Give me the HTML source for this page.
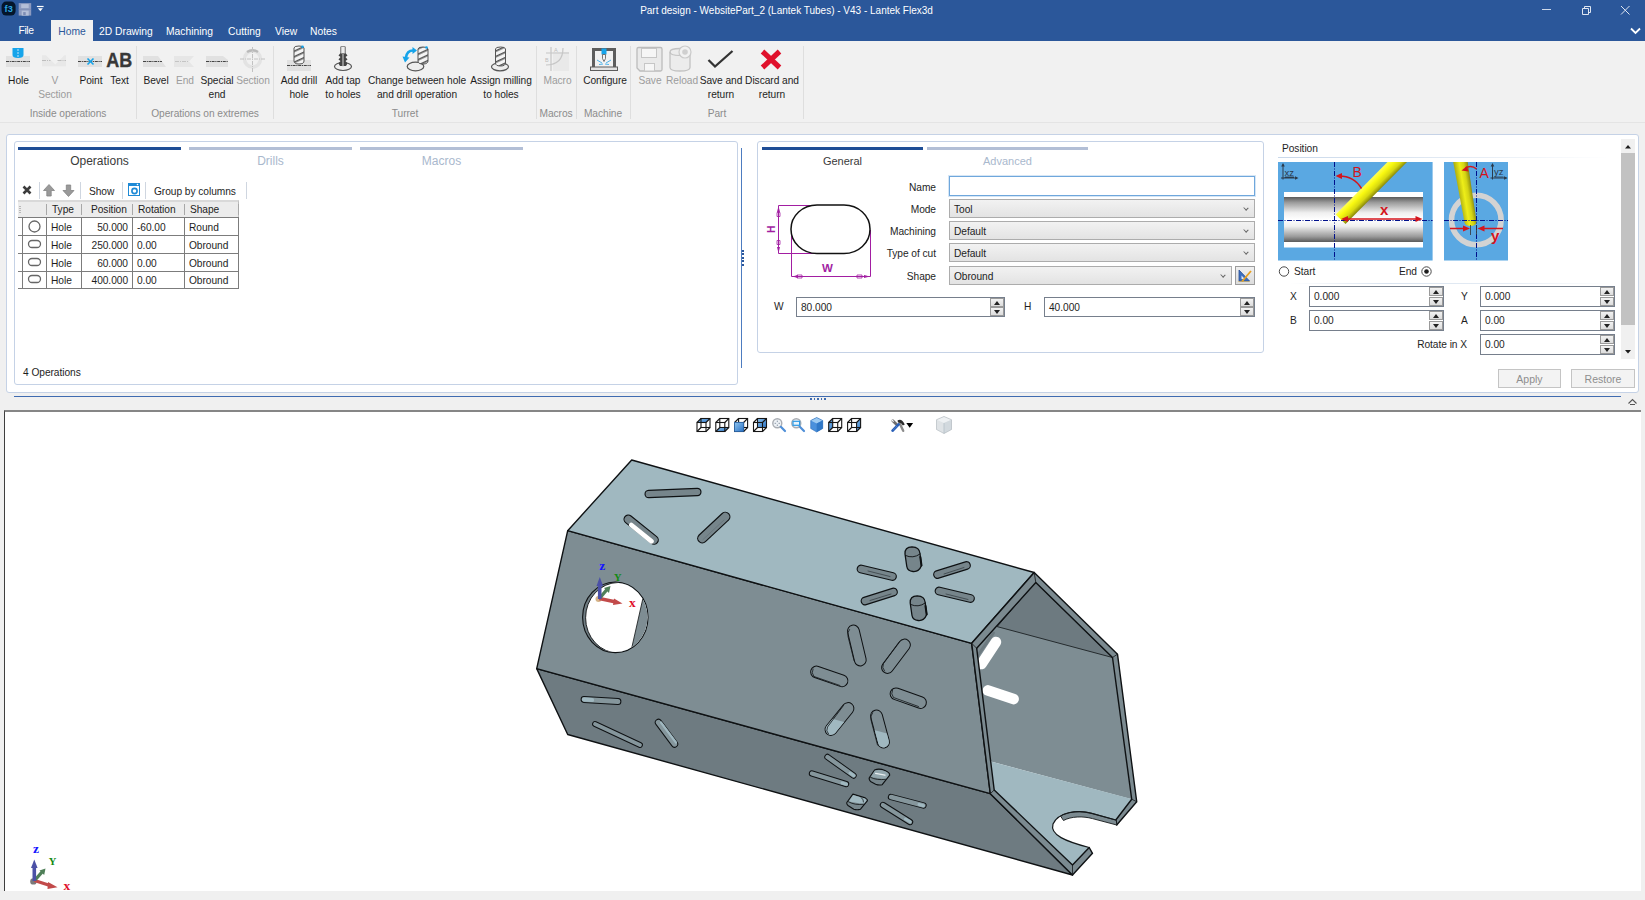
<!DOCTYPE html>
<html>
<head>
<meta charset="utf-8">
<title>Part design</title>
<style>
*{box-sizing:border-box;margin:0;padding:0}
html,body{width:1645px;height:900px;overflow:hidden;background:#f0f0f0}
body{position:relative;font-family:"Liberation Sans",sans-serif;font-size:11px;color:#1e1e1e}
.abs{position:absolute}
#titlebar{position:absolute;left:0;top:0;width:1645px;height:41px;background:#2b579a}
#title{position:absolute;left:0;top:3.800px;width:1573px;text-align:center;color:#fff;font-size:10px;line-height:14px}
.tab{position:absolute;top:25px;color:#fff;font-size:10.300px;line-height:14px;white-space:nowrap}
#hometab{position:absolute;left:51px;top:20px;width:42px;height:21px;background:#f1f1f1}
#hometab span{position:absolute;left:0;width:42px;text-align:center;top:5px;color:#2b579a;font-size:10.300px;line-height:14px}
#ribbon{position:absolute;left:0;top:41px;width:1645px;height:82px;background:#f1f1f1;border-bottom:1px solid #e4e4e4}
.rl{position:absolute;top:74px;letter-spacing:-.05px;font-size:10.200px;line-height:14px;text-align:center;white-space:nowrap;color:#1e1e1e;transform:translateX(-50%)}
.rl.dis{color:#9c9c9c}
.gl{position:absolute;top:106.800px;letter-spacing:-.05px;font-size:10.200px;line-height:14px;text-align:center;white-space:nowrap;color:#8c8c8c;transform:translateX(-50%)}
.gsep{position:absolute;top:46px;width:1px;height:73px;background:#dedede}
.panel{position:absolute;background:#fff;border:1px solid #c5d2e6;border-radius:3px}
.tabbar{position:absolute;top:147px;height:3px}
.tabbar.on{background:#1f4e96}
.tabbar.off{background:#b3bfd6}
.tlabel{position:absolute;top:153px;font-size:12px;line-height:16px;text-align:center;white-space:nowrap}
.tlabel.on{color:#3a3a3a}
.tlabel.off{color:#a9b8cd}
.t11{position:absolute;letter-spacing:-.05px;font-size:10.200px;line-height:14px;white-space:nowrap;color:#1e1e1e}
.inp{position:absolute;background:#fff;border:1px solid #767f8c;letter-spacing:-.05px;font-size:10.200px;line-height:16px;padding-left:4px;white-space:nowrap}
.cmb{position:absolute;height:19px;background:linear-gradient(#f2f2f2,#e3e3e3);border:1px solid #acacac;letter-spacing:-.05px;font-size:10.200px;line-height:19.500px;padding-left:4px;white-space:nowrap}
.cmb:after{content:"";position:absolute;right:6px;top:5.500px;width:3px;height:3px;border-right:1px solid #666;border-bottom:1px solid #666;transform:rotate(45deg) scale(1,.9)}
.spin{position:absolute;width:14px;height:9px;background:linear-gradient(#f2f2f2,#dcdcdc);border:1px solid #9a9a9a}
.spin:after{content:"";position:absolute;left:3px;top:2px;border-left:3px solid transparent;border-right:3px solid transparent}
.spin.up:after{border-bottom:4px solid #222}
.spin.dn:after{border-top:4px solid #222}
.btn{position:absolute;height:19px;background:#f3f3f3;border:1px solid #c4c4c4;color:#8e8e8e;font-size:10.500px;line-height:18.400px;text-align:center}
</style>
</head>
<body>
<div id="titlebar">
  <div id="title">Part design - WebsitePart_2 (Lantek Tubes) - V43 - Lantek Flex3d</div>
  <!-- app icon -->
  <svg class="abs" style="left:0;top:0" width="50" height="18" viewBox="0 0 50 18">
    <rect x="1.600" y="1.600" width="14" height="14" rx="4.500" fill="#04162b"/>
    <text x="4.600" y="12.300" font-family="Liberation Sans" font-size="9.500" font-weight="bold" fill="#2aa6e4" textLength="8.200" lengthAdjust="spacingAndGlyphs">f3</text>
    <g transform="translate(18.700,2.600)">
      <path d="M0 .5h12.500V13H0z" fill="#8d9bc0"/>
      <rect x="2.500" y="1.500" width="7.500" height="4" fill="#b4bfd8"/>
      <rect x="3" y="8" width="7" height="5" fill="#b4bfd8"/>
      <rect x="4.500" y="9.500" width="2.500" height="3" fill="#7d8cb4"/>
      <path d="M0 6.800h12.500" stroke="#7a89b0" stroke-width=".6"/>
    </g>
    <path d="M36.900 6.500h6.700" stroke="#fff" stroke-width="1.200"/>
    <path d="M37.800 8.200h5.100l-2.550 3z" fill="#fff"/>
  </svg>
  <!-- window controls -->
  <svg class="abs" style="left:1530px;top:0" width="115" height="41" viewBox="0 0 115 41">
    <path d="M12 9.5h9" stroke="#cfd9ea" stroke-width="1" fill="none"/>
    <path d="M52.5 8.5h6v6h-6z M54.5 8.5v-2h6v6h-2" stroke="#dfe6f2" stroke-width="1" fill="none"/>
    <path d="M91 6l8.5 8.5M99.5 6L91 14.5" stroke="#dfe6f2" stroke-width="1" fill="none"/>
    <path d="M101 28.5l4.5 4.5 4.5-4.5" stroke="#fff" stroke-width="1.8" fill="none"/>
  </svg>
  <div class="tab" style="left:18.500px;top:24.400px;letter-spacing:-.4px">File</div>
  <div id="hometab"><span>Home</span></div>
  <div class="tab" style="left:99px">2D Drawing</div>
  <div class="tab" style="left:166px">Machining</div>
  <div class="tab" style="left:228px">Cutting</div>
  <div class="tab" style="left:275px">View</div>
  <div class="tab" style="left:310px">Notes</div>
</div>
<div id="ribbon"></div>
<svg class="abs" style="left:0;top:41px" width="820" height="82" viewBox="0 41 820 82">
  <defs>
    <pattern id="dr" width="4" height="5" patternUnits="userSpaceOnUse" patternTransform="rotate(-25)"><rect width="4" height="5" fill="#f4f4f4"/><rect y="0" width="4" height="1.6" fill="#555"/></pattern>
  </defs>
  <!-- Hole -->
  <rect x="6" y="56" width="24" height="11" fill="#e1e1e1"/>
  <path d="M6 61.5h24" stroke="#444" stroke-width="1" stroke-dasharray="3 .7 1.200 .7"/>
  <path d="M12.5 48h11v7q0 3-5.5 3t-5.500-3z" fill="#16a4ea"/>
  <path d="M18 49v8" stroke="#bfe3f8" stroke-width="1" stroke-dasharray="2 1"/>
  <!-- V section (disabled) -->
  <path d="M42 55.200H46L55.300 64.500 64.300 55.200H66V66.300H42z" fill="#e8e8e8"/>
  <path d="M42 60.500h8.500M57.500 60.500h8.500" stroke="#bdbdbd" stroke-width="1" stroke-dasharray="4 1 1 1"/>
  <!-- Point -->
  <rect x="78" y="56" width="24" height="11" fill="#e1e1e1"/>
  <path d="M78 61.500h24" stroke="#444" stroke-width="1" stroke-dasharray="3 .7 1.200 .7"/>
  <path d="M87.500 58.500l6 6M93.500 58.500l-6 6" stroke="#16a4ea" stroke-width="1.600"/>
  <!-- AB -->
  <text x="106.200" y="66.700" font-family="Liberation Sans" font-weight="bold" font-size="21" fill="#383838" stroke="#383838" stroke-width=".35" textLength="26" lengthAdjust="spacingAndGlyphs">AB</text>
  <!-- Bevel -->
  <path d="M143 56h15l8 11H143z" fill="#e1e1e1"/>
  <path d="M143 61.500h19" stroke="#444" stroke-width="1" stroke-dasharray="3 .7 1.200 .7"/>
  <!-- End (disabled) -->
  <path d="M174 56h20l-5 5.500 5 5.500H174z" fill="#e6e6e6"/>
  <path d="M175 61.500h13" stroke="#c4c4c4" stroke-width="1" stroke-dasharray="4 1 1 1"/>
  <!-- Special end -->
  <path d="M206 56h17l5 4v7H206z" fill="#e1e1e1"/>
  <path d="M206 61.500h22" stroke="#444" stroke-width="1" stroke-dasharray="3 .7 1.200 .7"/>
  <!-- Section (disabled) -->
  <circle cx="252.500" cy="59" r="8" fill="none" stroke="#e3e3e3" stroke-width="3.500"/>
  <path d="M247 52q5.500-3.600 11 0" stroke="#b9b9b9" stroke-width="2.400" fill="none"/>
  <path d="M240 59h25M252.500 47v25" stroke="#c2c2c2" stroke-width="1" stroke-dasharray="4 1 1 1"/>
  <!-- Add drill hole -->
  <rect x="287" y="60" width="24" height="11" fill="#e1e1e1"/>
  <path d="M287 65.500h24" stroke="#444" stroke-width="1" stroke-dasharray="3 .7 1.200 .7"/>
  <path d="M294 48q0-2 5-2t5 2v13q0 3-5 3t-5-3z" fill="url(#dr)" stroke="#555" stroke-width="1"/>
  <circle cx="302.500" cy="46.800" r="1.300" fill="#16a4ea"/>
  <!-- Add tap -->
  <ellipse cx="343" cy="66.500" rx="8.500" ry="4" fill="#eee" stroke="#555" stroke-width="1.200"/>
  <path d="M340.500 47q2.500-1.500 5 0v6l2 2.500-2 1.500 2 2.500-2 1.500 2 2.500-1.500 2.500h-6l-1.500-2.500 2-2.500-2-1.500 2-2.500-2-1.500 2-2.500z" fill="#444"/>
  <rect x="341" y="46.500" width="4" height="7" fill="#ececec" stroke="#777" stroke-width=".6"/>
  <path d="M343 54v13" stroke="#d8d8d8" stroke-width="1"/>
  <!-- Change between -->
  <ellipse cx="415.500" cy="66.500" rx="8.300" ry="4.300" fill="#eee" stroke="#555" stroke-width="1.200"/>
  <path d="M418 49q0-2 5-2t5 2v12q0 3-5 3t-5-3z" fill="url(#dr)" stroke="#555" stroke-width="1"/>
  <circle cx="426.500" cy="47.500" r="1.300" fill="#16a4ea"/>
  <path d="M414 50.500q-7-.5-8 7" stroke="#16a4ea" stroke-width="2.600" fill="none"/>
  <path d="M412.500 47l4.500 3.500-4.500 3.500zM402.500 56.500l7 1-4.500 5z" fill="#16a4ea"/>
  <!-- Assign milling -->
  <ellipse cx="500" cy="66.800" rx="8.500" ry="4" fill="#eee" stroke="#555" stroke-width="1.200"/>
  <path d="M495.500 49q0-2 5-2t5 2v14q0 3-5 3t-5-3z" fill="url(#dr)" stroke="#555" stroke-width="1"/>
  <!-- Macro (disabled) -->
  <rect x="553" y="52" width="16" height="19" fill="#e9e9e9"/>
  <path d="M551 47v24M546 53h23" stroke="#c6c6c6" stroke-width="1.200"/>
  <path d="M563 48q0 17-17 17" stroke="#c6c6c6" stroke-width="1.200" fill="none"/>
  <text x="554" y="52" font-size="5.500" font-family="Liberation Sans" fill="#bdbdbd">A</text>
  <text x="545" y="62" font-size="5.500" font-family="Liberation Sans" fill="#bdbdbd">B</text>
  <!-- Configure -->
  <path d="M592 48h24v20h-3V51h-18v17h-3z" fill="#5d5d5d"/>
  <rect x="590.500" y="67" width="27" height="3.500" fill="#e2e2e2" stroke="#5d5d5d" stroke-width="1"/>
  <rect x="601.500" y="48.500" width="5" height="6" fill="#16a4ea"/>
  <path d="M602.500 54.500h3v4l-1.500 3-1.500-3z" fill="#f4f4f4" stroke="#555" stroke-width=".8"/>
  <path d="M597 60l5 3M611 60l-5 3M599 64.500l4-.5M609 64.500l-4-.5" stroke="#4fb4ea" stroke-width="1"/>
  <!-- Save (disabled) -->
  <path d="M638.500 47.500h22q1.500 0 1.500 1.500v20.500q0 1.500-1.500 1.500h-20.500l-3-3V49q0-1.500 1.500-1.500z" fill="#eaeaea" stroke="#bcbcbc" stroke-width="1.300"/>
  <rect x="641.500" y="48.500" width="15" height="9" fill="#f6f6f6" stroke="#c6c6c6" stroke-width="1"/>
  <rect x="644.500" y="63.500" width="10" height="7.500" fill="#f6f6f6" stroke="#c6c6c6" stroke-width="1"/>
  <!-- Reload (disabled) -->
  <path d="M670 52q0-3.500 10-3.500t10 3.500v15.500q0 3.500-10 3.500t-10-3.500z" fill="#ececec" stroke="#c2c2c2" stroke-width="1.300"/>
  <path d="M670 52q0 3.500 10 3.500t10-3.500" fill="none" stroke="#c2c2c2" stroke-width="1.200"/>
  <circle cx="685" cy="52" r="6" fill="#f1f1f1" stroke="#cacaca" stroke-width="1.200"/>
  <circle cx="685" cy="52" r="2.800" fill="#cfcfcf"/>
  <!-- Save and return -->
  <path d="M708.500 60l6.500 6.500L732.500 51" stroke="#333" stroke-width="2.300" fill="none"/>
  <!-- Discard -->
  <path d="M762.500 51.500l17 16M779.500 51.500l-17 16" stroke="#e0112c" stroke-width="5.200" fill="none"/>
</svg>
<div class="gsep" style="left:136px"></div><div class="gsep" style="left:273px"></div><div class="gsep" style="left:536px"></div><div class="gsep" style="left:576px"></div><div class="gsep" style="left:630px"></div><div class="gsep" style="left:803px"></div>
<div class="rl" style="left:18.500px">Hole</div>
<div class="rl dis" style="left:55px">V<br>Section</div>
<div class="rl" style="left:91px">Point</div>
<div class="rl" style="left:119.500px">Text</div>
<div class="rl" style="left:156px">Bevel</div>
<div class="rl dis" style="left:185px">End</div>
<div class="rl" style="left:217px">Special<br>end</div>
<div class="rl dis" style="left:253px">Section</div>
<div class="rl" style="left:299px">Add drill<br>hole</div>
<div class="rl" style="left:343px">Add tap<br>to holes</div>
<div class="rl" style="left:417px">Change between hole<br>and drill operation</div>
<div class="rl" style="left:501px">Assign milling<br>to holes</div>
<div class="rl dis" style="left:557.500px">Macro</div>
<div class="rl" style="left:605px">Configure</div>
<div class="rl dis" style="left:650px">Save</div>
<div class="rl dis" style="left:682px">Reload</div>
<div class="rl" style="left:721px">Save and<br>return</div>
<div class="rl" style="left:772px">Discard and<br>return</div>
<div class="gl" style="left:68px">Inside operations</div>
<div class="gl" style="left:205px">Operations on extremes</div>
<div class="gl" style="left:405px">Turret</div>
<div class="gl" style="left:556px">Macros</div>
<div class="gl" style="left:603px">Machine</div>
<div class="gl" style="left:717px">Part</div>
<div class="panel" style="left:6px;top:134px;width:1633px;height:259px"></div>
<div class="panel" style="left:14px;top:141px;width:724px;height:244px"></div>
<div class="panel" style="left:757px;top:141px;width:507px;height:212px"></div>
<!-- splitters -->
<div class="abs" style="left:741px;top:148px;width:1px;height:220px;background:#4d7cc0"></div>
<div class="abs" style="left:742px;top:250px;width:2px;height:17px;background:repeating-linear-gradient(#2b579a 0 2px,#fff 2px 3.400px)"></div>
<div class="abs" style="left:14px;top:396px;width:1607px;height:1px;background:#3f6bb0"></div>
<div class="abs" style="left:810px;top:398px;width:17px;height:2px;background:repeating-linear-gradient(90deg,#3f6bb0 0 1.600px,#f0f0f0 1.600px 3.500px)"></div>
<svg class="abs" style="left:1627px;top:397px" width="11" height="9" viewBox="0 0 11 9"><path d="M1.500 6.500l4-4 4 4M3 7.500h5" stroke="#555" stroke-width="1.100" fill="none"/></svg>
<!-- left tabs -->
<div class="tabbar on" style="left:18px;width:163px"></div>
<div class="tabbar off" style="left:189px;width:163px"></div>
<div class="tabbar off" style="left:360px;width:163px"></div>
<div class="tlabel on" style="left:18px;width:163px">Operations</div>
<div class="tlabel off" style="left:189px;width:163px">Drills</div>
<div class="tlabel off" style="left:360px;width:163px">Macros</div>
<!-- toolbar -->
<svg class="abs" style="left:18px;top:181px" width="232" height="20" viewBox="18 181 232 20">
  <path d="M23.500 186.500l7 7M30.500 186.500l-7 7" stroke="#3c3c3c" stroke-width="2.600"/>
  <path d="M39.500 182v17M80.500 182v17M122.500 182v17M145.500 182v17M246.500 182v17" stroke="#cfd6e0" stroke-width="1"/>
  <path d="M49 184.500l5.500 6h-3.300v5.500h-4.400v-5.500h-3.300z" fill="#9a9a9a" stroke="#848484" stroke-width=".8"/>
  <path d="M68.500 196.500l5.500-6h-3.300v-5.500h-4.400v5.500h-3.300z" fill="#9a9a9a" stroke="#848484" stroke-width=".8"/>
  <rect x="128.500" y="183.500" width="11" height="12" fill="#fff" stroke="#1e8ad6" stroke-width="1"/>
  <rect x="128" y="183" width="12" height="3" fill="#1e8ad6"/>
  <circle cx="134.500" cy="191" r="2.600" fill="none" stroke="#1e8ad6" stroke-width="1.600"/>
  <circle cx="137.500" cy="184.500" r=".8" fill="#fff"/>
</svg>
<div class="t11" style="left:89px;top:185px">Show</div>
<div class="t11" style="left:154px;top:185px">Group by columns</div>
<!-- table -->
<div class="abs" style="left:18px;top:200px;width:221px;height:18px;background:#ececec;border-top:2px solid #d9d9d9;border-right:1px solid #bdbdbd"></div>
<svg class="abs" style="left:18px;top:200px" width="222" height="90" viewBox="18 200 222 90">
  <path d="M18 217.500h221M18 235.500h221M18 253.500h221M18 271.500h221M18 288.500h221" stroke="#7c7c7c" stroke-width="1"/>
  <path d="M22.500 218v70M46.500 218v70M81.500 218v70M132.500 218v70M184.500 218v70M238.500 218v70" stroke="#7c7c7c" stroke-width="1"/>
  <path d="M46.500 204v11M81.500 204v11M132.500 204v11M184.500 204v11M238.500 204v11" stroke="#a8a8a8" stroke-width="1"/>
  <path d="M20 206v1M20 208v1M20 210v1M20 212v1" stroke="#888" stroke-width="1"/>
  <circle cx="34.500" cy="226.500" r="5.500" fill="#fff" stroke="#666" stroke-width="1.300"/>
  <rect x="28.500" y="240.500" width="12" height="7" rx="3.500" fill="#fff" stroke="#666" stroke-width="1.300"/>
  <rect x="28.500" y="258.500" width="12" height="7" rx="3.500" fill="#fff" stroke="#666" stroke-width="1.300"/>
  <rect x="28.500" y="275.500" width="12" height="7" rx="3.500" fill="#fff" stroke="#666" stroke-width="1.300"/>
</svg>
<div class="t11" style="left:52px;top:202.500px">Type</div><div class="t11" style="left:91px;top:202.500px">Position</div><div class="t11" style="left:138px;top:202.500px">Rotation</div><div class="t11" style="left:190px;top:202.500px">Shape</div>
<div class="t11" style="left:51px;top:221px">Hole</div><div class="t11" style="left:82px;top:221px;width:46px;text-align:right">50.000</div><div class="t11" style="left:137px;top:221px">-60.00</div><div class="t11" style="left:189px;top:221px">Round</div>
<div class="t11" style="left:51px;top:239px">Hole</div><div class="t11" style="left:82px;top:239px;width:46px;text-align:right">250.000</div><div class="t11" style="left:137px;top:239px">0.00</div><div class="t11" style="left:189px;top:239px">Obround</div>
<div class="t11" style="left:51px;top:257px">Hole</div><div class="t11" style="left:82px;top:257px;width:46px;text-align:right">60.000</div><div class="t11" style="left:137px;top:257px">0.00</div><div class="t11" style="left:189px;top:257px">Obround</div>
<div class="t11" style="left:51px;top:274px">Hole</div><div class="t11" style="left:82px;top:274px;width:46px;text-align:right">400.000</div><div class="t11" style="left:137px;top:274px">0.00</div><div class="t11" style="left:189px;top:274px">Obround</div>
<div class="t11" style="left:23px;top:366px">4 Operations</div>
<div class="tabbar on" style="left:762px;width:161px"></div>
<div class="tabbar off" style="left:927px;width:161px"></div>
<div class="tlabel on" style="left:762px;width:161px;font-size:11px">General</div>
<div class="tlabel off" style="left:927px;width:161px;font-size:11px">Advanced</div>
<div class="t11" style="left:836px;top:180.700px;width:100px;text-align:right">Name</div>
<div class="t11" style="left:836px;top:202.700px;width:100px;text-align:right">Mode</div>
<div class="t11" style="left:836px;top:224.700px;width:100px;text-align:right">Machining</div>
<div class="t11" style="left:836px;top:246.700px;width:100px;text-align:right">Type of cut</div>
<div class="t11" style="left:836px;top:269.700px;width:100px;text-align:right">Shape</div>
<div class="inp" style="left:949px;top:176px;width:306px;height:19.500px;border-color:#6fa7dc;box-shadow:0 0 0 1px #d6e6f5"></div>
<div class="cmb" style="left:949px;top:199px;width:306px">Tool</div>
<div class="cmb" style="left:949px;top:221px;width:306px">Default</div>
<div class="cmb" style="left:949px;top:243px;width:306px">Default</div>
<div class="cmb" style="left:949px;top:266px;width:283px">Obround</div>
<div class="abs" style="left:1235px;top:266px;width:20px;height:19px;background:linear-gradient(#f0f0f0,#dcdcdc);border:1px solid #9c9c9c"></div>
<svg class="abs" style="left:1237px;top:268px" width="16" height="15" viewBox="0 0 16 15">
  <path d="M2 13V2l10.500 11z" fill="#3c6fc0" stroke="#2a4f95" stroke-width=".8"/>
  <path d="M4.500 11V7.500l3.300 3.500z" fill="#dfe8f6"/>
  <path d="M5 13.500L14 3" stroke="#e8a020" stroke-width="1.800"/>
  <path d="M1.500 13.500h12" stroke="#c8a040" stroke-width="1" stroke-dasharray="1 1"/>
</svg>
<!-- obround diagram -->
<svg class="abs" style="left:762px;top:198px" width="120" height="84" viewBox="762 198 120 84">
  <path d="M778.500 205.500H822M778.500 253.500H822M778.500 205.500v48M791.500 230v46.500M870.500 230v46.500M791.500 276.500h79" stroke="#a21ea2" stroke-width="1" fill="none"/>
  <path d="M777 212.500h3v4h-3zM777 240.500h3v4h-3zM797 275h5v3h-5zM857 275h5v3h-5z" fill="none" stroke="#a21ea2" stroke-width=".8"/>
  <path d="M778.500 206l-1.500 6h3zM778.500 253l-1.500-6h3zM792 276.500l6-1.500v3zM870 276.500l-6-1.500v3z" fill="#a21ea2"/>
  <rect x="791" y="205" width="79" height="48.500" rx="26" ry="24" fill="#fff" stroke="#111" stroke-width="1.500"/>
  <text x="822" y="272" font-family="Liberation Sans" font-weight="bold" font-size="11.500" fill="#a21ea2">W</text>
  <text transform="translate(775,233) rotate(-90)" font-family="Liberation Sans" font-weight="bold" font-size="10.500" fill="#a21ea2">H</text>
</svg>
<div class="t11" style="left:774px;top:300px">W</div>
<div class="inp" style="left:796px;top:296.500px;width:209px;height:20.500px;line-height:20.400px">80.000</div>
<div class="spin up" style="left:990px;top:298px"></div><div class="spin dn" style="left:990px;top:307px"></div>
<div class="t11" style="left:1024px;top:300px">H</div>
<div class="inp" style="left:1044px;top:296.500px;width:211px;height:20.500px;line-height:20.400px">40.000</div>
<div class="spin up" style="left:1240px;top:298px"></div><div class="spin dn" style="left:1240px;top:307px"></div>
<div class="t11" style="left:1282px;top:142px">Position</div>
<div class="abs" style="left:1278px;top:157px;width:330px;height:1px;background:linear-gradient(90deg,#c9d8ea,#e6edf5 60%,#fff)"></div>
<div class="abs" style="left:1290px;top:283px;width:320px;height:1px;background:linear-gradient(90deg,#fff,#d9e3ef 30%,#e6edf5 70%,#fff)"></div>
<svg class="abs" style="left:1278px;top:162px" width="231" height="99" viewBox="1278 162 231 99">
  <defs>
    <linearGradient id="tube" x1="0" y1="0" x2="0" y2="1"><stop offset="0" stop-color="#5a5a5a"/><stop offset=".12" stop-color="#9a9a9a"/><stop offset=".35" stop-color="#efefef"/><stop offset=".5" stop-color="#fff"/><stop offset=".65" stop-color="#efefef"/><stop offset=".88" stop-color="#9a9a9a"/><stop offset="1" stop-color="#5a5a5a"/></linearGradient>
    <linearGradient id="rod" gradientUnits="userSpaceOnUse" x1="1336" y1="214" x2="1346" y2="224"><stop offset="0" stop-color="#ffff50"/><stop offset=".3" stop-color="#fafa10"/><stop offset=".65" stop-color="#d8d810"/><stop offset="1" stop-color="#808008"/></linearGradient>
    <linearGradient id="rod2" gradientUnits="userSpaceOnUse" x1="1459" y1="195" x2="1472.500" y2="192.800"><stop offset="0" stop-color="#b0b010"/><stop offset=".4" stop-color="#eeee18"/><stop offset=".7" stop-color="#d4d414"/><stop offset="1" stop-color="#8c8c10"/></linearGradient>
  </defs>
  <rect x="1278" y="162" width="154.600" height="98.500" fill="#5aa8e2"/>
  <rect x="1284" y="192" width="139" height="55.500" fill="#fff"/>
  <rect x="1284" y="197" width="139" height="45" fill="url(#tube)"/>
  <path d="M1335.600 214.500L1387.500 162H1407L1345.500 224z" fill="url(#rod)"/>
  <path d="M1334.500 162v98.500M1278 220.500h154.600" stroke="#00108c" stroke-width="1" stroke-dasharray="5 1.500 1 1.500"/>
  <path d="M1346 219h72" stroke="#d4141c" stroke-width="1.600"/>
  <path d="M1341 219l7-3v6zM1422.500 219l-7-3v6z" fill="#d4141c"/>
  <text x="1380" y="215" font-family="Liberation Sans" font-weight="bold" font-size="15" fill="#d4141c">x</text>
  <text x="1352.500" y="177" font-family="Liberation Sans" font-size="14" fill="#d4141c">B</text>
  <path d="M1339 176q15 0 22.500 12.500" stroke="#d4141c" stroke-width="1.500" fill="none"/>
  <path d="M1335.500 176l6.500-3v6z" fill="#d4141c"/>
  <path d="M1283 164.500v15M1281 178h16" stroke="#2c3a4a" stroke-width="1"/>
  <path d="M1283 163l-1.800 3.500h3.600zM1298.500 178l-3.500-1.800v3.600z" fill="#2c3a4a"/>
  <text x="1284.500" y="176" font-family="Liberation Sans" font-size="9.500" fill="#2c3a4a" text-decoration="underline">xz</text>
  <path d="M1285 177h9" stroke="#2c3a4a" stroke-width=".8"/>
  <rect x="1444" y="162" width="64" height="98.500" fill="#5aa8e2"/>
  <circle cx="1476.300" cy="220" r="24.800" fill="none" stroke="#d3d3d3" stroke-width="5.600"/>
  <path d="M1453.200 162h14.500L1476.600 222q-1 4-6 4t-6-3z" fill="url(#rod2)"/>
  <path d="M1476.500 162v98.500M1444 220.500h64" stroke="#00108c" stroke-width="1" stroke-dasharray="5 1.500 1 1.500"/>
  <path d="M1450 228.500h15M1483 228.500h20" stroke="#d4141c" stroke-width="1.600"/>
  <path d="M1470 228.500l-7-3v6zM1477.500 228.500l7-3v6z" fill="#d4141c"/>
  <path d="M1470.500 225v10M1476.500 225v10" stroke="#333" stroke-width=".8"/>
  <text x="1491" y="241" font-family="Liberation Sans" font-weight="bold" font-size="15" fill="#d4141c">y</text>
  <text x="1479.500" y="178" font-family="Liberation Sans" font-size="14" fill="#d4141c">A</text>
  <path d="M1476.500 169q-5-4.500-11-1" stroke="#d4141c" stroke-width="1.500" fill="none"/>
  <path d="M1461.500 170.500l5.500-4.500 1.500 5.500z" fill="#d4141c"/>
  <path d="M1492.500 164.500v15M1490.500 178h16" stroke="#2c3a4a" stroke-width="1"/>
  <path d="M1492.500 163l-1.800 3.500h3.600zM1507.500 178l-3.500-1.800v3.600z" fill="#2c3a4a"/>
  <text x="1494" y="175" font-family="Liberation Sans" font-size="9.500" fill="#2c3a4a">yz</text>
  <path d="M1494.500 177h9" stroke="#2c3a4a" stroke-width=".8"/>
</svg>
<svg class="abs" style="left:1278px;top:265px" width="156" height="13" viewBox="1278 265 156 13">
  <circle cx="1284" cy="271.500" r="4.700" fill="#fff" stroke="#4a4a4a" stroke-width="1"/>
  <circle cx="1426.500" cy="271.500" r="4.700" fill="#fff" stroke="#4a4a4a" stroke-width="1"/>
  <circle cx="1426.500" cy="271.500" r="2.300" fill="#1e1e1e"/>
</svg>
<div class="t11" style="left:1294px;top:265px">Start</div>
<div class="t11" style="left:1399px;top:265px">End</div>
<div class="t11" style="left:1290px;top:290px">X</div>
<div class="t11" style="left:1290px;top:314px">B</div>
<div class="t11" style="left:1461px;top:290px">Y</div>
<div class="t11" style="left:1461px;top:314px">A</div>
<div class="t11" style="left:1367px;top:338px;width:100px;text-align:right">Rotate in X</div>
<div class="inp" style="left:1309px;top:286px;width:135px;height:21px;line-height:20.400px">0.000</div>
<div class="inp" style="left:1309px;top:310px;width:135px;height:21px;line-height:20.400px">0.00</div>
<div class="inp" style="left:1480px;top:286px;width:135px;height:21px;line-height:20.400px">0.000</div>
<div class="inp" style="left:1480px;top:310px;width:135px;height:21px;line-height:20.400px">0.00</div>
<div class="inp" style="left:1480px;top:334px;width:135px;height:21px;line-height:20.400px">0.00</div>
<div class="spin up" style="left:1429px;top:287px"></div><div class="spin dn" style="left:1429px;top:296.500px"></div>
<div class="spin up" style="left:1429px;top:311px"></div><div class="spin dn" style="left:1429px;top:320.500px"></div>
<div class="spin up" style="left:1600px;top:287px"></div><div class="spin dn" style="left:1600px;top:296.500px"></div>
<div class="spin up" style="left:1600px;top:311px"></div><div class="spin dn" style="left:1600px;top:320.500px"></div>
<div class="spin up" style="left:1600px;top:335px"></div><div class="spin dn" style="left:1600px;top:344.500px"></div>
<!-- scrollbar -->
<div class="abs" style="left:1621px;top:139px;width:14px;height:220px;background:#f0f0f0"></div>
<div class="abs" style="left:1621px;top:153px;width:14px;height:172px;background:#c2c2c2"></div>
<svg class="abs" style="left:1621px;top:139px" width="14" height="220" viewBox="0 0 14 220"><path d="M4 9.500l3-3.500 3 3.500z" fill="#1e1e1e"/><path d="M4 211l3 3.500 3-3.500z" fill="#1e1e1e"/></svg>
<div class="btn" style="left:1498px;top:369px;width:63px">Apply</div>
<div class="btn" style="left:1571px;top:369px;width:64px">Restore</div>
<div class="abs" style="left:4px;top:410px;width:1637px;height:481px;background:#fff;border-top:2px solid #868686;border-left:1px solid #3e3e3e"></div>
<svg class="abs" style="left:5px;top:412px" width="1636" height="479" viewBox="5 412 1636 479">
<g stroke-linejoin="round" stroke-linecap="round">
  <!-- interior of tube (seen through open end) -->
  <path d="M973.500 646L1035.800 582.500 1112.500 657.500 1131.700 799.200 989 761z" fill="#7e8d93"/>
  <path d="M1035.800 582.500L1112.500 657.500 997.500 626.700z" fill="#6d7a80" stroke="#1c2124" stroke-width=".9"/>
  <path d="M989 761L1130.800 798.700 1131.700 799.200 1115.800 820 1091.700 813.300C1078 809.500 1058 812 1053 824C1049.500 835 1066 841.500 1089.200 847.500L1072.500 865 991.500 791z" fill="#a0b8c0"/>
  <!-- white slots in back wall -->
  <path d="M996 642L981.500 664" stroke="#fff" stroke-width="10.500" fill="none"/>
  <path d="M988 690.500L1013.500 699" stroke="#fff" stroke-width="10.800" fill="none"/>
  <path d="M978 655L993.500 633" stroke="#6d7a80" stroke-width="3" fill="none"/>
  <!-- lower face -->
  <path d="M536.700 668.600L990.300 793.700 1072.500 875 567.700 734.500z" fill="#6e7b81" stroke="#0e1113" stroke-width="1.400"/>
  <!-- front face -->
  <path d="M567.700 530.700L971.700 643.300 990.300 793.700 536.700 668.600z" fill="#7e8d93" stroke="#0e1113" stroke-width="1.400"/>
  <!-- top face -->
  <path d="M631.700 460L1034.200 572.500 971.700 643.300 567.700 530.700z" fill="#a0b8c0" stroke="#0e1113" stroke-width="1.400"/>
  <!-- end frame (wall thickness) -->
  <path fill-rule="evenodd" d="M971.700 643.300L1034.200 572.500 1117.500 654.200 1136.700 801.700 1116.700 825 1115.800 820 1131.700 799.200 1112.500 657.500 1035.800 582.500 976.700 648.300 994.200 790 1072.500 865 1089.200 847.500 1092.500 853.300 1072.500 875 990.300 793.700z" fill="#7b8a90" stroke="#0e1113" stroke-width="1.400"/>
  <path d="M1115.800 820L1091.700 813.300C1082 810.600 1069 810.800 1060.500 816L1063.500 820.500C1071 816.300 1083 816 1092.500 818.600L1116.700 825z" fill="#7b8a90" stroke="#14181a" stroke-width=".9"/>
  <path d="M1115.800 820L1091.700 813.300C1078 809.500 1058 812 1053 824C1049.500 835 1066 841.500 1089.200 847.500" fill="none" stroke="#14181a" stroke-width="1.200"/>
  <path d="M971.700 643.300L976.700 648.300M1034.200 572.500L1035.800 582.500M1117.500 654.200L1112.500 657.500M1136.700 801.700L1131.700 799.200M990.300 793.700L994.200 790M1072.500 875L1072.500 865" stroke="#14181a" stroke-width=".8"/>
  <!--HOLES_START-->
<!-- top face left slots -->
<path d="M648.7 494.0L697.3 492.0" stroke="#0e1113" stroke-width="8.5" fill="none"/><path d="M648.7 494.0L697.3 492.0" stroke="#76858b" stroke-width="6.2" fill="none"/>
<path d="M628.3 519.3L654.0 540.0" stroke="#0e1113" stroke-width="9.7" fill="none"/><path d="M628.3 519.3L654.0 540.0" stroke="#76858b" stroke-width="7.4" fill="none"/>
<path d="M631.300 525L651.500 541.300" stroke="#fff" stroke-width="4.800" fill="none"/>
<path d="M702.3 538.3L725.3 516.8" stroke="#0e1113" stroke-width="10.3" fill="none"/><path d="M702.3 538.3L725.3 516.8" stroke="#76858b" stroke-width="8.0" fill="none"/>
<path d="M703 539.500L724 520" stroke="#6a777d" stroke-width="1" fill="none"/>
<!-- top face radial slots -->
<path d="M905 554Q904.500 547 912 546.800Q919.500 547 920 553.500L921.500 565.500Q919 572 913 571.500Q907.500 571 906.800 566.500z" fill="#76858b" stroke="#0e1113" stroke-width="1.300"/><path d="M905.500 555.500q7.500 3.500 14.500-1.500" fill="none" stroke="#0e1113" stroke-width=".9"/><path d="M920.300 557l1.200 8.500" stroke="#0e1113" stroke-width="2"/>
<path d="M861.0 569.0L892.5 576.5" stroke="#0e1113" stroke-width="8.8" fill="none"/><path d="M861.0 569.0L892.5 576.5" stroke="#76858b" stroke-width="6.5" fill="none"/>
<path d="M865.0 601.0L893.5 592.0" stroke="#0e1113" stroke-width="8.8" fill="none"/><path d="M865.0 601.0L893.5 592.0" stroke="#76858b" stroke-width="6.5" fill="none"/>
<path d="M910.200 603Q909.700 596 917.200 595.800Q924.700 596 925.200 602.500L926.700 614.500Q924.200 621 918.200 620.500Q912.700 620 912 615.500z" fill="#76858b" stroke="#0e1113" stroke-width="1.300"/><path d="M910.700 604.500q7.500 3.500 14.500-1.500" fill="none" stroke="#0e1113" stroke-width=".9"/><path d="M925.500 606l1.200 8.500" stroke="#0e1113" stroke-width="2"/>
<path d="M937.5 574.5L966.5 565.5" stroke="#0e1113" stroke-width="8.8" fill="none"/><path d="M937.5 574.5L966.5 565.5" stroke="#76858b" stroke-width="6.5" fill="none"/>
<path d="M939.0 591.0L970.5 598.5" stroke="#0e1113" stroke-width="8.8" fill="none"/><path d="M939.0 591.0L970.5 598.5" stroke="#76858b" stroke-width="6.5" fill="none"/>
<path d="M868 571l22 5.500M870 600.500l21-6.500M944 574l20-6.500M946 594l22 5.500" stroke="#3a4347" stroke-width=".8" fill="none"/>
<!-- front face radial slots -->
<path d="M853.4 631.0L860.3 660.0" stroke="#0e1113" stroke-width="12.8" fill="none"/><path d="M853.4 631.0L860.3 660.0" stroke="#7e8d93" stroke-width="10.8" fill="none"/>
<path d="M904.5 645.0L887.5 667.5" stroke="#0e1113" stroke-width="12.8" fill="none"/><path d="M904.5 645.0L887.5 667.5" stroke="#7e8d93" stroke-width="10.8" fill="none"/>
<path d="M816.5 672.0L842.0 680.8" stroke="#0e1113" stroke-width="12.8" fill="none"/><path d="M816.5 672.0L842.0 680.8" stroke="#7e8d93" stroke-width="10.8" fill="none"/>
<path d="M896.0 693.8L920.5 702.5" stroke="#0e1113" stroke-width="12.8" fill="none"/><path d="M896.0 693.8L920.5 702.5" stroke="#7e8d93" stroke-width="10.8" fill="none"/>
<path d="M848.0 708.5L831.0 729.5" stroke="#0e1113" stroke-width="12.8" fill="none"/><path d="M848.0 708.5L831.0 729.5" stroke="#7e8d93" stroke-width="10.8" fill="none"/>
<path d="M876.5 716.0L883.5 742.0" stroke="#0e1113" stroke-width="12.8" fill="none"/><path d="M876.5 716.0L883.5 742.0" stroke="#7e8d93" stroke-width="10.8" fill="none"/>
<clipPath id="flr"><path d="M700 683.300L1000 763.700V900H700z"/></clipPath>
<g clip-path="url(#flr)"><path d="M848 708.500L831 729.500M876.500 716L883.500 742" stroke="#a0b8c0" stroke-width="10.800" fill="none"/></g>
<path d="M849.500 629.500q-2.500 3 -1.500 7l6 24M899.500 641.500l-16 22q-2 4 1 7.500M813 669q-2 4 1 7.500l26 9M892.500 690q-2 4 1 7.500l25 9M843.500 705.500l-16 21.500q-2 4 1 7M872.500 713q-2.500 3 -1.500 7l6.500 25" stroke="#14181a" stroke-width=".8" fill="none"/>
<!-- round hole -->
<ellipse cx="615.300" cy="617.300" rx="32.700" ry="35.300" fill="#6f7c82" stroke="#0e1113" stroke-width="1.100"/>
<clipPath id="rh"><ellipse cx="615.300" cy="617.300" rx="32.200" ry="34.800"/></clipPath>
<g clip-path="url(#rh)"><ellipse cx="618.300" cy="617.800" rx="32.700" ry="35.300" fill="#fff" stroke="#0e1113" stroke-width=".9"/><path d="M642.700 599.300L632 646.700 640 660 660 640 655 590z" fill="#7e8d93" stroke="#0e1113" stroke-width=".8"/></g>
<!-- lower face slots -->
<path d="M584.0 699.5L618.0 701.5" stroke="#0e1113" stroke-width="6.8" fill="none"/><path d="M584.0 699.5L618.0 701.5" stroke="#85969c" stroke-width="4.8" fill="none"/>
<path d="M584 699.500L592 700" stroke="#a0b8c0" stroke-width="4.200" fill="none"/>
<path d="M595.0 724.0L640.0 745.0" stroke="#0e1113" stroke-width="5.8" fill="none"/><path d="M595.0 724.0L640.0 745.0" stroke="#85969c" stroke-width="3.8" fill="none"/>
<path d="M658.5 722.5L674.5 744.0" stroke="#0e1113" stroke-width="7.4" fill="none"/><path d="M658.5 722.5L674.5 744.0" stroke="#85969c" stroke-width="5.4" fill="none"/>
<path d="M661 722.500L676 742.500" stroke="#a0b8c0" stroke-width="2.200" fill="none"/>
<path d="M827.5 757.0L853.5 775.5" stroke="#0e1113" stroke-width="6.4" fill="none"/><path d="M827.5 757.0L853.5 775.5" stroke="#85969c" stroke-width="4.4" fill="none"/>
<path d="M812.0 773.5L846.0 784.0" stroke="#0e1113" stroke-width="6.4" fill="none"/><path d="M812.0 773.5L846.0 784.0" stroke="#85969c" stroke-width="4.4" fill="none"/>
<path d="M891.0 797.0L923.5 805.5" stroke="#0e1113" stroke-width="6.4" fill="none"/><path d="M891.0 797.0L923.5 805.5" stroke="#85969c" stroke-width="4.4" fill="none"/>
<path d="M883.0 805.0L910.0 822.0" stroke="#0e1113" stroke-width="6.4" fill="none"/><path d="M883.0 805.0L910.0 822.0" stroke="#85969c" stroke-width="4.4" fill="none"/>
<path d="M850 773l4 2.700M842 783l4.500 1.300M919 804.500l4.500 1.200M905.500 819l4.500 2.800" stroke="#a0b8c0" stroke-width="3" fill="none"/>
<path d="M874.600 770Q879 768 885 770.500Q890 772.500 889.700 775.200L882.200 784.700Q879 785.500 875.600 784.200L870.500 781.500Q868.500 779 869.400 777.500z" fill="#76858b" stroke="#0e1113" stroke-width="1.100"/>
<path d="M874.800 770.800Q879 769 884.800 771.300Q888.800 773 888.700 775L885.500 779.200 871 777z" fill="#93a7ae"/>
<path d="M870.600 777.400Q877 780.500 885.500 779.300" fill="none" stroke="#0e1113" stroke-width=".8"/>
<path d="M875.600 773.300L885 775.200" stroke="#e8eef0" stroke-width="1.300"/>
<path d="M852.900 794.100L865.200 797.900Q867.800 799.500 867.500 800.700L860.500 809.200Q857 810.200 853.800 809.200L848 805.500Q846.300 804 846.800 802.500z" fill="#76858b" stroke="#0e1113" stroke-width="1.100"/>
<path d="M853.200 795L864.800 798.600Q866.600 799.800 866.300 800.700L863.500 804 848.800 801.500z" fill="#a0b8c0"/>
<path d="M848.500 801.800Q855 805.500 863.500 804.200" fill="none" stroke="#0e1113" stroke-width=".8"/>
<path d="M861 797.500q3 1.500 2.500 4.500" fill="none" stroke="#0e1113" stroke-width=".7"/>
<!--HOLES_END-->
</g>
<g font-family="Liberation Serif" font-weight="bold" font-size="12.500">
  <!-- part gizmo -->
  <circle cx="598.500" cy="599" r="3" fill="#c9a06a" opacity=".8"/>
  <path d="M599.300 598.500L616 602" stroke="#c24a4a" stroke-width="3.400"/>
  <path d="M614 598.500l8.500 5-9.500 1.500z" fill="#c24a4a"/>
  <path d="M599.800 598L607 589.500" stroke="#4f7f58" stroke-width="3.400"/>
  <path d="M604 588l6.500-2-1.500 7z" fill="#4f7f58"/>
  <path d="M599.700 599V585" stroke="#4b50a6" stroke-width="3.600"/>
  <path d="M596.500 586l3.300-9 3.300 9z" fill="#4b50a6"/>
  <text x="599.300" y="569.500" fill="#1414ff" font-size="13.500">z</text>
  <text x="614" y="581" fill="#128a12" font-size="10.500">Y</text>
  <text x="629" y="606.500" fill="#e0102b" font-size="13.500">x</text>
  <!-- corner gizmo -->
  <circle cx="33.400" cy="881.400" r="3.200" fill="#7a7a7a"/>
  <path d="M34.500 880.500L50 885.500" stroke="#c24a4a" stroke-width="3.400"/>
  <path d="M48 882l9.500 5.300-10 1.700z" fill="#c24a4a"/>
  <path d="M35 880L42.500 871.500" stroke="#4f7f58" stroke-width="3.400"/>
  <path d="M39.500 870.500l6-2-1.300 6.500z" fill="#4f7f58"/>
  <path d="M34.300 881V867" stroke="#4b50a6" stroke-width="3.600"/>
  <path d="M31 868l3.300-8.500 3.300 8.500z" fill="#4b50a6"/>
  <text x="33" y="853" fill="#1414ff" font-size="13.500">z</text>
  <text x="48.800" y="865" fill="#128a12" font-size="10.500">Y</text>
  <text x="63.500" y="890" fill="#e0102b" font-size="13.500">x</text>
</g>
</svg>
<svg class="abs" style="left:690px;top:414px" width="270" height="22" viewBox="690 414 270 22">
  <defs>
    <linearGradient id="bl" x1="0" y1="0" x2="1" y2="1"><stop offset="0" stop-color="#8ec4f0"/><stop offset="1" stop-color="#2a72c4"/></linearGradient>
    <g id="cw" fill="none" stroke="#161616" stroke-width="1.100"><rect x=".5" y="4.500" width="9" height="9"/><rect x="4.500" y=".5" width="9" height="9"/><path d="M.5 4.500l4-4M9.500 4.500l4-4M.5 13.500l4-4M9.500 13.500l4-4"/></g>
  </defs>
  <g transform="translate(696.500,418)"><path d="M.5 4.500l4-4h9l-4 4z" fill="url(#bl)"/><use href="#cw"/></g>
  <g transform="translate(715.300,418)"><path d="M.5 13.500l4-4h9l-4 4z" fill="url(#bl)"/><use href="#cw"/></g>
  <g transform="translate(734.100,418)"><use href="#cw"/><rect x=".5" y="4.500" width="9" height="9" fill="url(#bl)" stroke="#2a72c4" stroke-width=".6"/></g>
  <g transform="translate(753,418)"><rect x="4.500" y=".5" width="9" height="9" fill="url(#bl)"/><use href="#cw"/></g>
  <g transform="translate(772,418)"><circle cx="5.300" cy="5.300" r="4.500" fill="#eef2f6" stroke="#a9adb3" stroke-width="1.400"/><path d="M8.800 8.800l4.200 4.200" stroke="#4f8fd8" stroke-width="2.200" stroke-linecap="round"/><path d="M5.300 2.600v1.500M5.300 6.500v1.500M2.600 5.300h1.500M6.500 5.300h1.500" stroke="#8a98a8" stroke-width="1"/></g>
  <g transform="translate(791,418)"><circle cx="5.300" cy="5.300" r="4.500" fill="#eef2f6" stroke="#a9adb3" stroke-width="1.400"/><path d="M8.800 8.800l4.200 4.200" stroke="#4f8fd8" stroke-width="2.200" stroke-linecap="round"/><rect x="2" y="3.300" width="6.600" height="4" fill="#e8f4fc" stroke="#2a9ae6" stroke-width="1.200"/></g>
  <g transform="translate(810.700,417.500)"><path d="M6 0l6 3v8l-6 3.500-6-3.500V3z" fill="#4a90dc"/><path d="M6 0l6 3-6 3-6-3z" fill="#9ccaf2"/><path d="M6 6v8.500l6-3.500V3z" fill="#2f78c8"/><path d="M6 0l6 3v8l-6 3.500-6-3.500V3z" fill="none" stroke="#2a6cb8" stroke-width=".6"/></g>
  <g transform="translate(828.200,418)"><path d="M.5 4.500l4-4v9l-4 4z" fill="url(#bl)"/><use href="#cw"/></g>
  <g transform="translate(847.100,418)"><path d="M9.500 4.500l4-4v9l-4 4z" fill="url(#bl)"/><use href="#cw"/></g>
  <!-- tools -->
  <g transform="translate(891,419)">
    <path d="M8.500 4L12.200 11.800" stroke="#8c8c8c" stroke-width="2.400" stroke-linecap="round"/>
    <path d="M6.600 1.300Q10.800 -1.200 13.800 5.600L11.800 6.500Q10 3 6.900 3.600z" fill="#2e2e2e"/>
    <path d="M1.800 1.800L5.800 5.800" stroke="#6e6e6e" stroke-width="2.800" stroke-linecap="round"/>
    <path d="M.8 .8l1.800 1.800" stroke="#fff" stroke-width="1.200"/>
    <path d="M1.600 11.600L7.600 5.400" stroke="#2a60b8" stroke-width="2.800" stroke-linecap="round"/>
    <path d="M2.600 10.600l3.400-3.500" stroke="#7ba4e0" stroke-width=".8" stroke-dasharray="1 .8"/>
    <path d="M15.300 4.100h6.800l-3.400 4.700z" fill="#000"/>
  </g>
  <!-- ghost cube -->
  <g transform="translate(936.500,416.500)"><path d="M7.500 0l7.500 3.200v9.800L7.500 17 0 13V3.200z" fill="#dfe3e6"/><path d="M7.500 0l7.500 3.200-7.500 3.300L0 3.200z" fill="#eef1f3"/><path d="M7.500 6.500V17l7.500-4V3.200z" fill="#d2d9de"/><path d="M7.500 6.500V17" stroke="#b4c0c8" stroke-width=".8"/><path d="M7.500 0l7.500 3.200v9.800L7.500 17 0 13V3.200z" fill="none" stroke="#b4bcc2" stroke-width=".7"/></g>
</svg>
</body>
</html>
